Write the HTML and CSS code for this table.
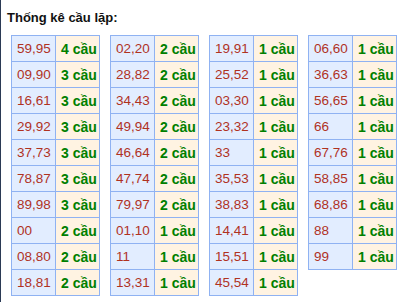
FILE: index.html
```html
<!DOCTYPE html>
<html lang="vi">
<head>
<meta charset="utf-8">
<title>Thống kê cầu lặp</title>
<link rel="stylesheet" href="styles.css">
</head>
<body>
<div class="page">
  <h3 class="title">Thống kê cầu lặp:</h3>
  <div class="tables">
    <table class="loto">
      <tr><td class="num">59,95</td><td class="cnt">4 cầu</td></tr>
      <tr><td class="num">09,90</td><td class="cnt">3 cầu</td></tr>
      <tr><td class="num">16,61</td><td class="cnt">3 cầu</td></tr>
      <tr><td class="num">29,92</td><td class="cnt">3 cầu</td></tr>
      <tr><td class="num">37,73</td><td class="cnt">3 cầu</td></tr>
      <tr><td class="num">78,87</td><td class="cnt">3 cầu</td></tr>
      <tr><td class="num">89,98</td><td class="cnt">3 cầu</td></tr>
      <tr><td class="num">00</td><td class="cnt">2 cầu</td></tr>
      <tr><td class="num">08,80</td><td class="cnt">2 cầu</td></tr>
      <tr><td class="num">18,81</td><td class="cnt">2 cầu</td></tr>
    </table>
    <table class="loto">
      <tr><td class="num">02,20</td><td class="cnt">2 cầu</td></tr>
      <tr><td class="num">28,82</td><td class="cnt">2 cầu</td></tr>
      <tr><td class="num">34,43</td><td class="cnt">2 cầu</td></tr>
      <tr><td class="num">49,94</td><td class="cnt">2 cầu</td></tr>
      <tr><td class="num">46,64</td><td class="cnt">2 cầu</td></tr>
      <tr><td class="num">47,74</td><td class="cnt">2 cầu</td></tr>
      <tr><td class="num">79,97</td><td class="cnt">2 cầu</td></tr>
      <tr><td class="num">01,10</td><td class="cnt">1 cầu</td></tr>
      <tr><td class="num">11</td><td class="cnt">1 cầu</td></tr>
      <tr><td class="num">13,31</td><td class="cnt">1 cầu</td></tr>
    </table>
    <table class="loto">
      <tr><td class="num">19,91</td><td class="cnt">1 cầu</td></tr>
      <tr><td class="num">25,52</td><td class="cnt">1 cầu</td></tr>
      <tr><td class="num">03,30</td><td class="cnt">1 cầu</td></tr>
      <tr><td class="num">23,32</td><td class="cnt">1 cầu</td></tr>
      <tr><td class="num">33</td><td class="cnt">1 cầu</td></tr>
      <tr><td class="num">35,53</td><td class="cnt">1 cầu</td></tr>
      <tr><td class="num">38,83</td><td class="cnt">1 cầu</td></tr>
      <tr><td class="num">14,41</td><td class="cnt">1 cầu</td></tr>
      <tr><td class="num">15,51</td><td class="cnt">1 cầu</td></tr>
      <tr><td class="num">45,54</td><td class="cnt">1 cầu</td></tr>
    </table>
    <table class="loto">
      <tr><td class="num">06,60</td><td class="cnt">1 cầu</td></tr>
      <tr><td class="num">36,63</td><td class="cnt">1 cầu</td></tr>
      <tr><td class="num">56,65</td><td class="cnt">1 cầu</td></tr>
      <tr><td class="num">66</td><td class="cnt">1 cầu</td></tr>
      <tr><td class="num">67,76</td><td class="cnt">1 cầu</td></tr>
      <tr><td class="num">58,85</td><td class="cnt">1 cầu</td></tr>
      <tr><td class="num">68,86</td><td class="cnt">1 cầu</td></tr>
      <tr><td class="num">88</td><td class="cnt">1 cầu</td></tr>
      <tr><td class="num">99</td><td class="cnt">1 cầu</td></tr>
    </table>
  </div>
</div>
</body>
</html>
```

FILE: styles.css
```css
html, body {
  margin: 0;
  padding: 0;
  background: #ffffff;
}

body {
  font-family: "Liberation Sans", Arial, sans-serif;
  font-size: 14px;
}

.page {
  border-left: 1px solid #2b3a55;
  min-height: 302px;
  box-sizing: border-box;
}

.title {
  margin: 0;
  padding: 10px 0 0 6px;
  height: 35px;
  box-sizing: border-box;
  font-size: 13px;
  font-weight: bold;
  line-height: 16px;
  color: #111111;
}

.tables {
  display: flex;
  align-items: flex-start;
  gap: 10px;
  padding-left: 10px;
}

.loto {
  border-collapse: collapse;
  table-layout: fixed;
  border: 1px solid #8fb2f2;
}

.loto td {
  border: 1px solid #8fb2f2;
  width: 44px;
  height: 26px;
  padding: 0 0 0 5px;
  box-sizing: border-box;
  font-size: 14px;
  line-height: 16px;
  vertical-align: middle;
  text-align: left;
  white-space: nowrap;
  overflow: visible;
}

.loto td.num {
  background: #e2edff;
  color: #b0321f;
  font-size: 13.5px;
}

.loto td.cnt {
  background: #fff3e2;
  color: #008000;
  font-weight: bold;
}
```
